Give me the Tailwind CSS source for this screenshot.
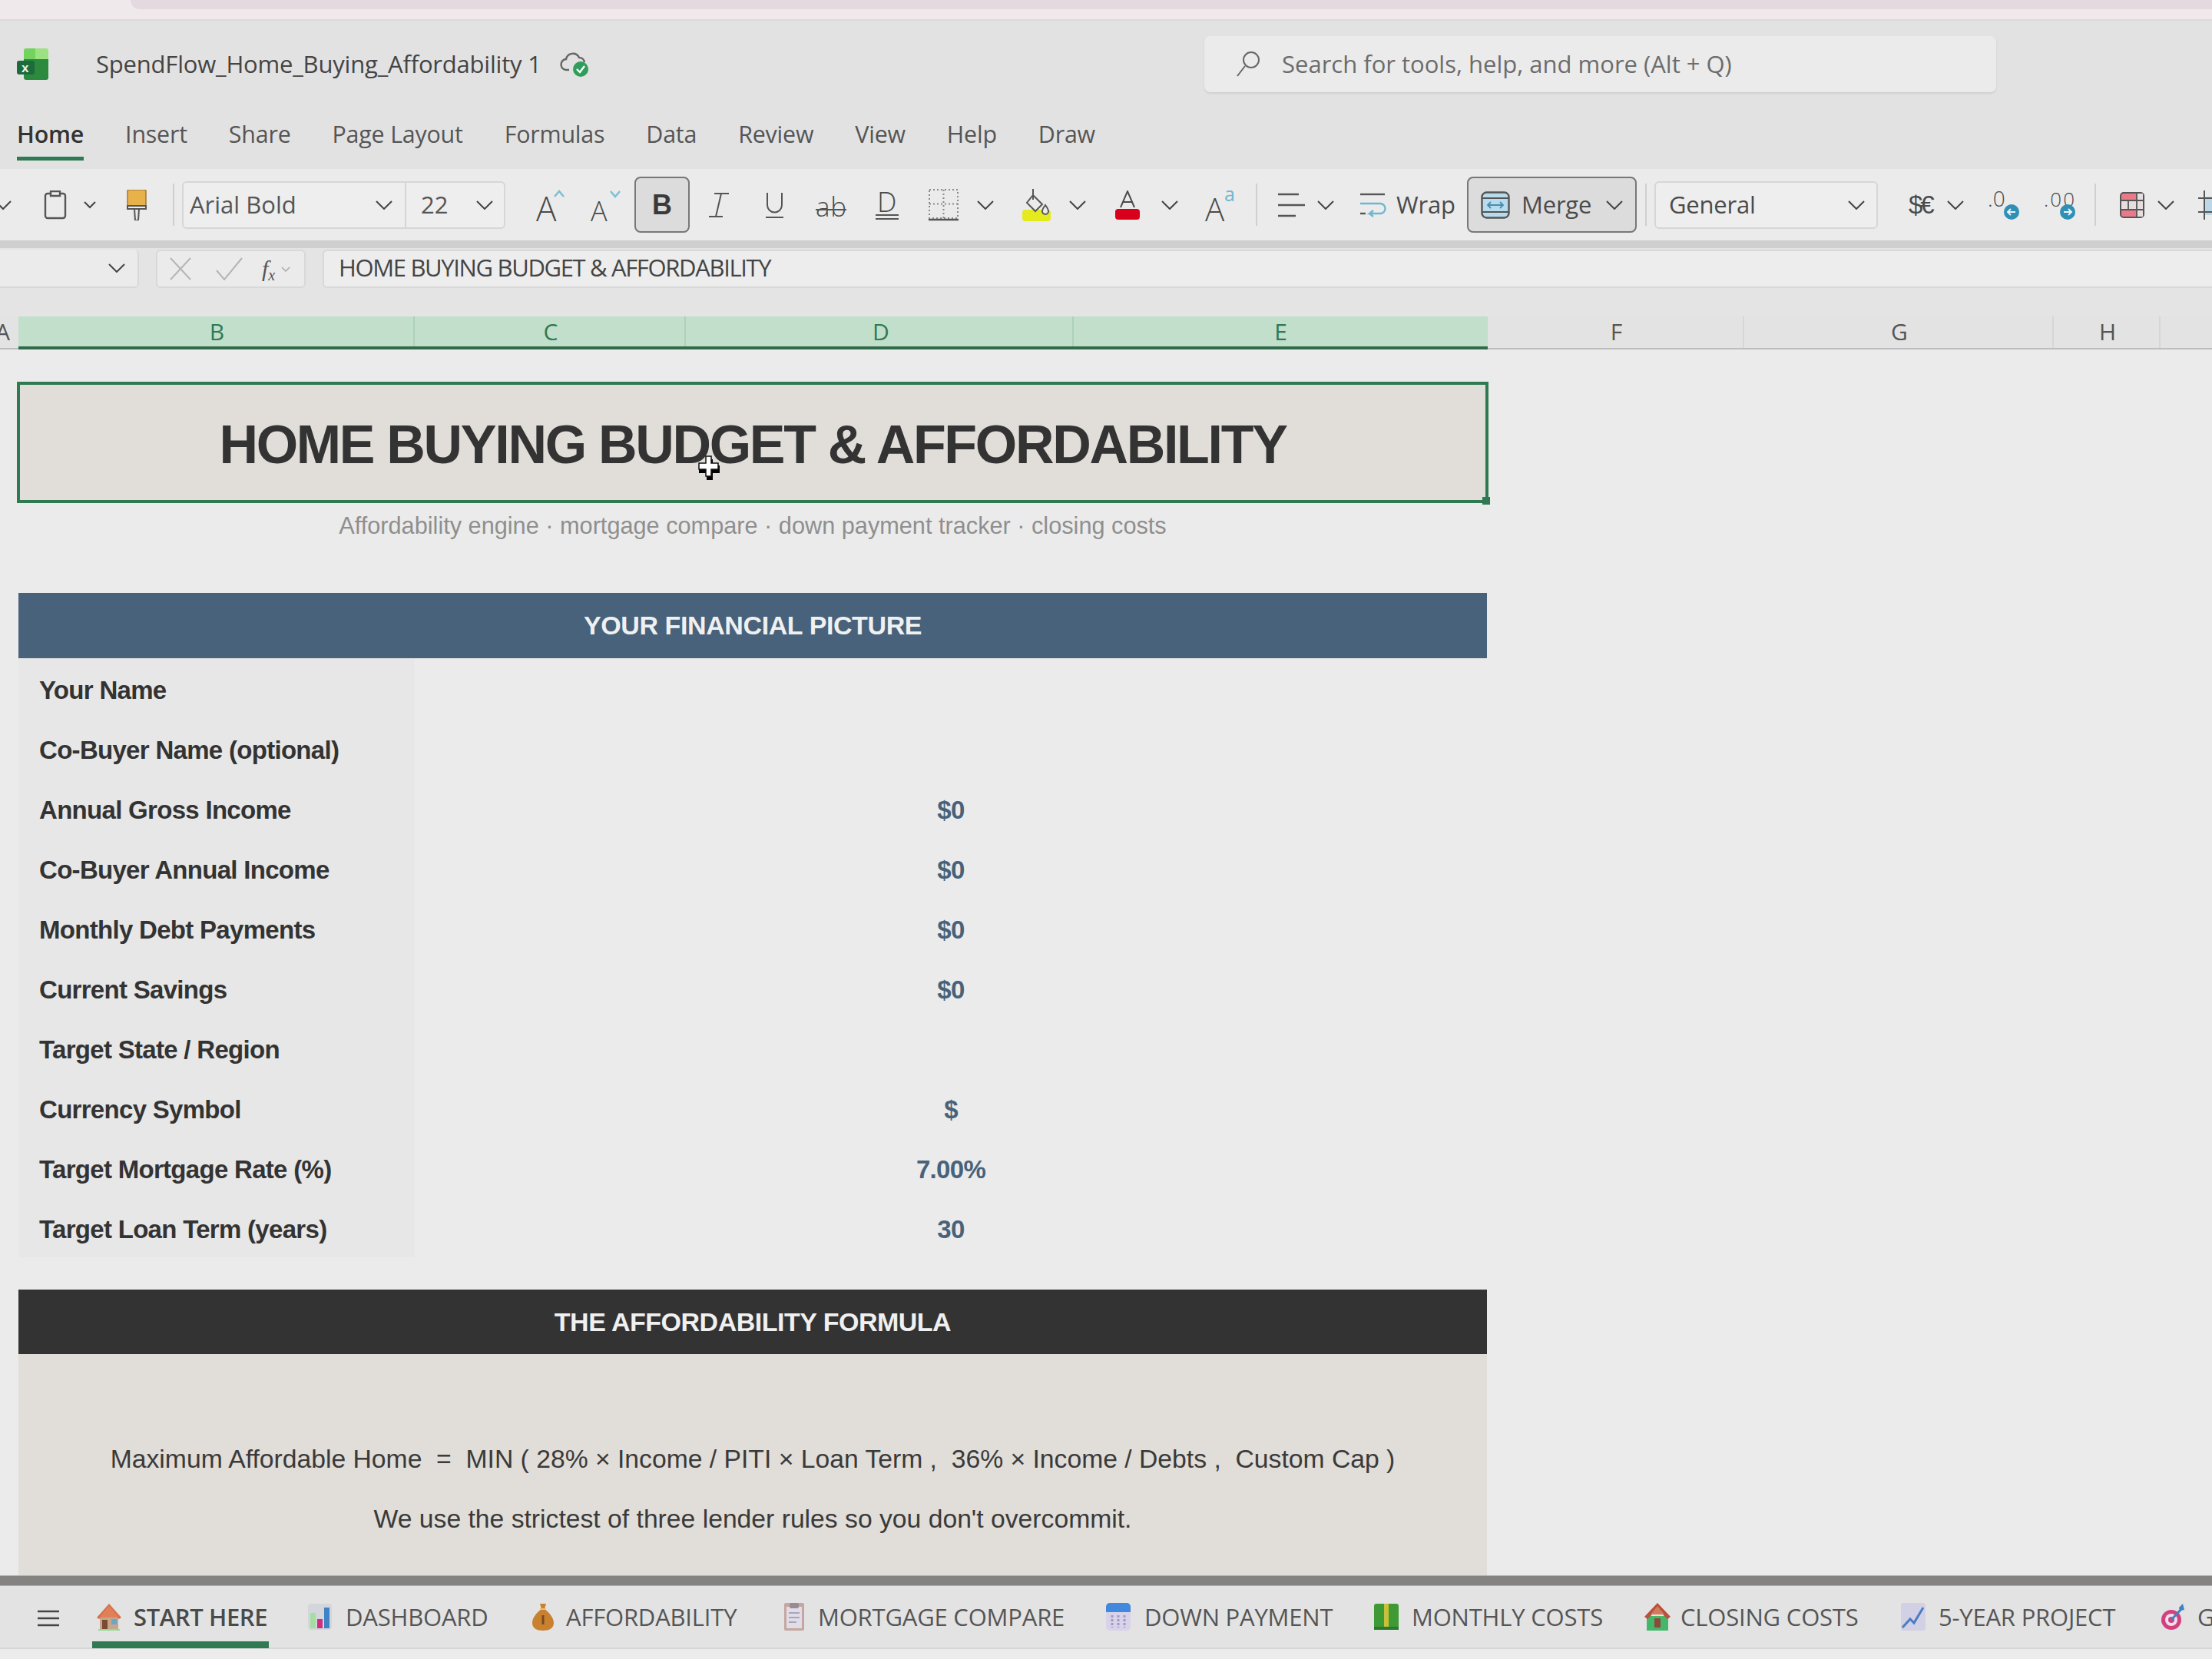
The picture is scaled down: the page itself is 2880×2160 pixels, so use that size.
<!DOCTYPE html>
<html>
  <head>
    <meta charset="UTF-8" />
    <title>SpendFlow_Home_Buying_Affordability 1</title>
    <script src="https://cdn.jsdelivr.net/npm/@tailwindcss/browser@4"></script>
  </head>
  <body>
    <div class="relative flex flex-col w-[2880px] h-[2160px] overflow-hidden bg-[#ebebeb] text-[#4a4a4a] font-['Open_Sans',sans-serif]">
      <!-- Browser strip -->
      <div class="h-[27px] shrink-0 pl-[170px] bg-[#efe9eb] border-b-2 border-[#dcd9da]">
        <div class="h-[12px] rounded-bl-[14px] bg-[#e3d9de]"></div>
      </div>

      <!-- Title bar -->
      <div class="flex items-center h-[112px] shrink-0 bg-[#e2e2e2] [&>*]:shrink-0">
        <svg class="ml-[22px] w-[41px] h-[41px] overflow-visible" viewBox="0 0 41 41">
          <path d="M9 3a3 3 0 013-3h12v14H9z" fill="#74d35f" />
          <path d="M24 0h14a3 3 0 013 3v11H24z" fill="#9ce282" />
          <path d="M9 14h32v24a3 3 0 01-3 3H12a3 3 0 01-3-3z" fill="#2b8a3e" />
          <path d="M3 16h17a3 3 0 013 3v12a3 3 0 01-3 3H3a3 3 0 01-3-3V19a3 3 0 013-3z" fill="#1d6a3b" />
          <text x="6" y="31" font-size="17" font-weight="700" fill="#e8f3ea" font-family="Liberation Sans">x</text>
        </svg>
        <span class="ml-[62px] w-[578px] text-[31px] tracking-[-0.2px] whitespace-nowrap text-[#444]">SpendFlow_Home_Buying_Affordability 1</span>
        <svg class="ml-[26px] w-[38px] h-[36px]" viewBox="0 0 38 36" fill="none">
          <path d="M12 26H9a7 7 0 01-1-14 9 9 0 0117-2 7 7 0 017 6" stroke="#666" stroke-width="2.4" />
          <circle cx="27" cy="25" r="10" fill="#2f9e5b" />
          <path d="M22 25l4 4 6-8" stroke="#fff" stroke-width="2.4" />
        </svg>
        <div class="flex items-center ml-[801px] w-[1031px] h-[73px] rounded-lg bg-[#ebebeb] shadow-[0_2px_3px_#cfcfcf]">
          <svg class="ml-[40px] w-[36px] h-[36px]" viewBox="0 0 36 36" fill="none" stroke="#666" stroke-width="2">
            <circle cx="21" cy="13" r="10" />
            <path d="M13 21L3 34" />
          </svg>
          <span class="ml-[25px] text-[31px] whitespace-nowrap text-[#6c6c6c]">Search for tools, help, and more (Alt + Q)</span>
        </div>
      </div>

      <!-- Ribbon tabs -->
      <div class="flex h-[81px] shrink-0 pl-[22px] gap-[54px] bg-[#e2e2e2] text-[30.4px] tracking-[-0.2px] text-[#555]">
        <div class="relative pt-[13px] font-semibold text-[#333]">
          Home
          <div class="absolute left-0 right-0 top-[65px] h-[5px] bg-[#2f7a52]"></div>
        </div>
        <div class="pt-[13px]">Insert</div>
        <div class="pt-[13px]">Share</div>
        <div class="pt-[13px]">Page Layout</div>
        <div class="pt-[13px]">Formulas</div>
        <div class="pt-[13px]">Data</div>
        <div class="pt-[13px]">Review</div>
        <div class="pt-[13px]">View</div>
        <div class="pt-[13px]">Help</div>
        <div class="pt-[13px]">Draw</div>
      </div>

      <!-- Toolbar -->
      <div class="flex items-center h-[93px] shrink-0 bg-[#ebebeb] text-[31px] text-[#4a4a4a] [&>*]:shrink-0">
        <svg class="w-[15px] h-[14px]" viewBox="0 0 15 14" fill="none" stroke="#444" stroke-width="2"><path d="M-6 2l10 10L14 2" /></svg>
        <svg class="ml-[42px] w-[30px] h-[38px]" viewBox="0 0 30 38" fill="none" stroke="#555" stroke-width="2.4">
          <rect x="2" y="4" width="26" height="32" rx="3" />
          <path d="M9 1h12v6H9z" fill="#ebebeb" />
        </svg>
        <svg class="ml-[22px] w-[16px] h-[10px]" viewBox="0 0 16 10" fill="none" stroke="#444" stroke-width="2"><path d="M1 1l7 7 7-7" /></svg>
        <svg class="ml-[40px] w-[26px] h-[40px]" viewBox="0 0 26 40" fill="none">
          <rect x="1" y="0" width="24" height="21" rx="2" fill="#e8b24a" stroke="#9a7a3a" stroke-width="1.5" />
          <path d="M1 21h24v4H1zM10 25h6l-1 15h-4z" fill="#ebebeb" stroke="#555" stroke-width="2" />
        </svg>
        <div class="ml-[34px] w-[2px] h-[55px] bg-[#cfcfcf]"></div>

        <!-- Font family and size -->
        <div class="flex items-center ml-[10px] w-[421px] h-[62px] rounded-md border-2 border-[#d6d6d6] bg-[#eeeeee]">
          <div class="flex items-center w-[290px] h-full border-r-2 border-[#d6d6d6]">
            <span class="ml-[8px] w-[242px] text-[#555]">Arial Bold</span>
            <svg class="w-[22px] h-[12px]" viewBox="0 0 22 12" fill="none" stroke="#444" stroke-width="2"><path d="M1 1l10 10L21 1" /></svg>
          </div>
          <span class="ml-[19px] w-[72px] text-[#555]">22</span>
          <svg class="w-[22px] h-[12px]" viewBox="0 0 22 12" fill="none" stroke="#444" stroke-width="2"><path d="M1 1l10 10L21 1" /></svg>
        </div>

        <svg class="ml-[40px] w-[37px] h-[46px] overflow-visible" viewBox="0 0 37 46" fill="none">
          <text x="0" y="44" font-size="44" font-weight="300" fill="#4a4a4a" font-family="Open Sans">A</text>
          <path d="M24 12l6-7 6 7" stroke="#7cc0d4" stroke-width="2.5" />
        </svg>
        <svg class="ml-[34px] w-[39px] h-[46px] overflow-visible" viewBox="0 0 39 46" fill="none">
          <text x="0" y="44" font-size="36" font-weight="300" fill="#4a4a4a" font-family="Open Sans">A</text>
          <path d="M26 5l6 7 6-7" stroke="#7cc0d4" stroke-width="2.5" />
        </svg>
        <div class="flex items-center justify-center ml-[18px] w-[72px] h-[73px] rounded-lg border-2 border-[#777] bg-[#dcdcdc] text-[36px] font-bold text-[#3a3a3a] font-['Liberation_Sans',sans-serif]">B</div>
        <svg class="ml-[25px] w-[27px] h-[34px]" viewBox="0 0 27 34" fill="none" stroke="#555" stroke-width="2"><path d="M7 2h19M16 2L9 32M0 32h18" /></svg>
        <svg class="ml-[46px] w-[25px] h-[34px]" viewBox="0 0 25 34" fill="none" stroke="#555" stroke-width="2"><path d="M3 1v16a9.500 9.500 0 0019 0V1M1 33h23" /></svg>
        <svg class="ml-[41px] w-[40px] h-[38px] overflow-visible" viewBox="0 0 40 38" fill="none">
          <text x="0" y="34" font-size="35" font-weight="300" fill="#4a4a4a" font-family="Open Sans" textLength="40">ab</text>
          <path d="M0 25h40" stroke="#555" stroke-width="2" />
        </svg>
        <svg class="ml-[37px] w-[32px] h-[38px] overflow-visible" viewBox="0 0 32 38" fill="none">
          <text x="3" y="28" font-size="36" font-weight="300" fill="#4a4a4a" font-family="Open Sans">D</text>
          <path d="M1 32h30M1 37h30" stroke="#555" stroke-width="2" />
        </svg>
        <svg class="ml-[38px] w-[39px] h-[42px]" viewBox="0 0 39 42" fill="none">
          <path d="M1 1h37v37H1zM19.500 1v37M1 19.500h37" stroke="#8a8a8a" stroke-width="2" stroke-dasharray="2 3" />
          <path d="M0 40h39" stroke="#555" stroke-width="2.500" />
        </svg>
        <svg class="ml-[24px] w-[22px] h-[12px]" viewBox="0 0 22 12" fill="none" stroke="#444" stroke-width="2"><path d="M1 1l10 10L21 1" /></svg>
        <svg class="ml-[37px] w-[37px] h-[42px]" viewBox="0 0 37 42" fill="none">
          <rect x="0" y="27" width="37" height="15" rx="4" fill="#e4ea1e" />
          <path d="M14 8l12 12-9 9L6 18zM14 0v14" stroke="#555" stroke-width="2" />
          <path d="M30 21c-3 4-4 6-4 8a4 4 0 008 0c0-2-1-4-4-8z" fill="#ebebeb" stroke="#555" stroke-width="2" />
        </svg>
        <svg class="ml-[24px] w-[22px] h-[12px]" viewBox="0 0 22 12" fill="none" stroke="#444" stroke-width="2"><path d="M1 1l10 10L21 1" /></svg>
        <svg class="ml-[38px] w-[32px] h-[38px]" viewBox="0 0 32 38" fill="none">
          <path d="M7 22l9-21 9 21M10 15h12" stroke="#4a4a4a" stroke-width="2" />
          <rect x="0" y="24" width="32" height="14" rx="4" fill="#d9001b" />
        </svg>
        <svg class="ml-[28px] w-[22px] h-[12px]" viewBox="0 0 22 12" fill="none" stroke="#444" stroke-width="2"><path d="M1 1l10 10L21 1" /></svg>
        <svg class="ml-[35px] w-[39px] h-[46px] overflow-visible" viewBox="0 0 39 46" fill="none">
          <text x="0" y="44" font-size="42" font-weight="300" fill="#4a4a4a" font-family="Open Sans">A</text>
          <text x="25" y="18" font-size="25" fill="#6fb7cf" font-family="Open Sans">a</text>
        </svg>
        <div class="ml-[27px] w-[2px] h-[55px] bg-[#cfcfcf]"></div>
        <svg class="ml-[26px] w-[36px] h-[32px]" viewBox="0 0 36 32" fill="none" stroke="#555" stroke-width="2.400"><path d="M1 2h27M1 16h35M1 30h23" /></svg>
        <svg class="ml-[16px] w-[22px] h-[12px]" viewBox="0 0 22 12" fill="none" stroke="#444" stroke-width="2"><path d="M1 1l10 10L21 1" /></svg>
        <svg class="ml-[32px] w-[36px] h-[32px]" viewBox="0 0 36 32" fill="none" stroke-width="2.400">
          <path d="M2 2h32" stroke="#555" />
          <path d="M2 14h26a6 6 0 010 13H14l5-4M14 27l5 4" stroke="#6fb7cf" />
          <path d="M2 27h7" stroke="#555" />
        </svg>
        <span class="ml-[13px] w-[78px] tracking-[-0.2px]">Wrap</span>

        <div class="flex items-center ml-[14px] w-[221px] h-[73px] rounded-lg border-2 border-[#777] bg-[#dcdcdc]">
          <svg class="ml-[16px] w-[38px] h-[36px]" viewBox="0 0 38 36" fill="none">
            <rect x="1.500" y="1.500" width="35" height="33" rx="6" fill="#b6dcee" stroke="#555" stroke-width="2.400" />
            <path d="M1.500 9h35M1.500 27h35" stroke="#555" stroke-width="2" />
            <path d="M9 18h20M13 14l-4 4 4 4M25 14l4 4-4 4" stroke="#4a8cad" stroke-width="1.800" />
          </svg>
          <span class="ml-[15px] w-[100px] tracking-[-0.2px]">Merge</span>
          <svg class="ml-[10px] w-[22px] h-[12px]" viewBox="0 0 22 12" fill="none" stroke="#444" stroke-width="2"><path d="M1 1l10 10L21 1" /></svg>
        </div>
        <div class="ml-[11px] w-[2px] h-[55px] bg-[#cfcfcf]"></div>
        <div class="flex items-center ml-[10px] w-[291px] h-[62px] rounded-md border-2 border-[#d6d6d6] bg-[#eeeeee]">
          <span class="ml-[17px] w-[233px] tracking-[-0.2px]">General</span>
          <svg class="w-[22px] h-[12px]" viewBox="0 0 22 12" fill="none" stroke="#444" stroke-width="2"><path d="M1 1l10 10L21 1" /></svg>
        </div>
        <span class="ml-[40px] w-[34px] whitespace-nowrap tracking-[-3px] text-[33px] font-['Liberation_Sans',sans-serif]">$€</span>
        <svg class="ml-[16px] w-[22px] h-[12px]" viewBox="0 0 22 12" fill="none" stroke="#444" stroke-width="2"><path d="M1 1l10 10L21 1" /></svg>
        <svg class="ml-[31px] w-[41px] h-[40px] overflow-visible" viewBox="0 0 41 40" fill="none">
          <text x="0" y="22" font-size="28" font-weight="300" fill="#4a4a4a" font-family="Open Sans">.0</text>
          <circle cx="31" cy="29" r="10" fill="#2f8fb5" />
          <path d="M36 29H26M30 25l-4 4 4 4" stroke="#e8f4f8" stroke-width="2" />
        </svg>
        <svg class="ml-[32px] w-[42px] h-[40px] overflow-visible" viewBox="0 0 42 40" fill="none">
          <text x="0" y="22" font-size="26" font-weight="300" fill="#4a4a4a" font-family="Open Sans" textLength="40">.00</text>
          <circle cx="31" cy="29" r="10" fill="#2f8fb5" />
          <path d="M26 29h10M32 25l4 4-4 4" stroke="#e8f4f8" stroke-width="2" />
        </svg>
        <div class="ml-[24px] w-[2px] h-[55px] bg-[#cfcfcf]"></div>
        <svg class="ml-[31px] w-[32px] h-[34px]" viewBox="0 0 32 34" fill="none">
          <rect x="1" y="1" width="30" height="32" rx="4" fill="#e87b8a" stroke="#555" stroke-width="2" />
          <path d="M2 11h28v12H2z" fill="#e6dede" />
          <path d="M22 2h8v30h-8z" fill="#e6dede" />
          <path d="M1 11h30M1 23h30M22 1v32M11 11v12" stroke="#555" stroke-width="1.800" />
        </svg>
        <svg class="ml-[17px] w-[22px] h-[12px]" viewBox="0 0 22 12" fill="none" stroke="#444" stroke-width="2"><path d="M1 1l10 10L21 1" /></svg>
        <svg class="ml-[31px] w-[30px] h-[38px]" viewBox="0 0 30 38" fill="none">
          <path d="M9 8h21v24H9z" fill="#bcd8e8" />
          <path d="M8 0v38M0 10h30M0 28h30" stroke="#555" stroke-width="2" />
        </svg>
      </div>
      <div class="h-[10px] shrink-0 bg-[#cfcfd0]"></div>

      <!-- Formula bar -->
      <div class="flex items-start gap-[22px] h-[89px] pt-[2px] shrink-0 bg-[#e4e4e4]">
        <div class="flex items-center justify-end w-[181px] h-[50px] pr-[16px] rounded-r-md border-r-2 border-b-2 border-[#d8d8d8] bg-[#ebebeb]">
          <svg class="w-[22px] h-[12px]" viewBox="0 0 22 12" fill="none" stroke="#444" stroke-width="2"><path d="M1 1l10 10L21 1" /></svg>
        </div>
        <div class="flex items-center w-[195px] h-[50px] rounded-md border-2 border-[#d8d8d8] bg-[#ebebeb]">
          <svg class="ml-[15px] w-[30px] h-[30px]" viewBox="0 0 30 30" fill="none" stroke="#b5b5b5" stroke-width="2"><path d="M2 1l26 28M28 1L2 29" /></svg>
          <svg class="ml-[30px] w-[37px] h-[30px]" viewBox="0 0 37 30" fill="none" stroke="#b5b5b5" stroke-width="2"><path d="M2 17l10 12L35 1" /></svg>
          <span class="ml-[24px] text-[30px] leading-none italic text-[#555] font-['Liberation_Serif',serif]">f<sub class="text-[20px]">x</sub></span>
          <svg class="ml-[8px] w-[12px] h-[7px]" viewBox="0 0 12 7" fill="none" stroke="#aaa" stroke-width="1.500"><path d="M1 1l5 5 5-5" /></svg>
        </div>
        <div class="flex items-center flex-1 h-[50px] pl-[19px] pb-[4px] rounded-l-md border-2 border-r-0 border-[#d8d8d8] bg-[#ededed] text-[31px] tracking-[-1.350px] whitespace-nowrap text-[#444]">HOME BUYING BUDGET &amp; AFFORDABILITY</div>
      </div>

      <!-- Column headers -->
      <div class="flex h-[43px] shrink-0 bg-[#e3e3e3] text-[30px] leading-[39px] text-[#555]">
        <div class="w-[24px] border-b-[2px] border-[#bdbdbd] overflow-hidden"><span class="block -ml-[6px]">A</span></div>
        <div class="flex w-[1913px] border-b-[4px] border-[#2f6b4b] bg-[#c1dfcb] text-[#2f7a50]">
          <div class="w-[516px] pl-[3px] text-center border-r-2 border-[#aed1b9]">B</div>
          <div class="w-[353px] pl-[3px] text-center border-r-2 border-[#aed1b9]">C</div>
          <div class="w-[505px] pl-[5px] text-center border-r-2 border-[#aed1b9]">D</div>
          <div class="w-[539px] text-center">E</div>
        </div>
        <div class="flex flex-1 border-b-[2px] border-[#bdbdbd]">
          <div class="w-[334px] pl-[3px] text-center border-r-2 border-[#d6d6d6]">F</div>
          <div class="w-[403px] pl-[3px] text-center border-r-2 border-[#d6d6d6]">G</div>
          <div class="w-[139px] pl-[3px] text-center border-r-2 border-[#d6d6d6]">H</div>
        </div>
      </div>

      <!-- Sheet -->
      <div class="relative flex-1 pl-[24px] pt-[42px] overflow-hidden font-['Liberation_Sans',sans-serif]">
        <div class="w-[1912px]">
          <div class="relative flex items-center justify-center h-[158px] pt-[6px] -mx-[2px] border-[4px] border-[#2f7a52] bg-[#e1ddd8] text-[70px] tracking-[-2.3px] leading-none font-bold text-[#333]">
            HOME BUYING BUDGET &amp; AFFORDABILITY
            <div class="absolute -right-[6px] -bottom-[6px] w-[10px] h-[10px] bg-[#2f7a52]"></div>
          </div>
          <div class="flex items-center justify-center h-[60px] text-[30.7px] text-[#8f8f8f]">Affordability engine · mortgage compare · down payment tracker · closing costs</div>

          <div class="flex items-center justify-center h-[85px] mt-[57px] bg-[#47627a] text-[34px] tracking-[-0.4px] font-bold text-[#f0f0f0]">YOUR FINANCIAL PICTURE</div>
          <div class="grid grid-cols-[516px_1fr] auto-rows-[78px] items-stretch text-[33px] tracking-[-0.7px] font-bold text-[#333] [&>*]:pt-[6px]">
            <div class="flex items-center pl-[27px] bg-[#e7e7e7]">Your Name</div>
            <div class="flex items-center justify-center text-[#47627a]"></div>
            <div class="flex items-center pl-[27px] bg-[#e7e7e7]">Co-Buyer Name (optional)</div>
            <div class="flex items-center justify-center text-[#47627a]"></div>
            <div class="flex items-center pl-[27px] bg-[#e7e7e7]">Annual Gross Income</div>
            <div class="flex items-center justify-center text-[#47627a]">$0</div>
            <div class="flex items-center pl-[27px] bg-[#e7e7e7]">Co-Buyer Annual Income</div>
            <div class="flex items-center justify-center text-[#47627a]">$0</div>
            <div class="flex items-center pl-[27px] bg-[#e7e7e7]">Monthly Debt Payments</div>
            <div class="flex items-center justify-center text-[#47627a]">$0</div>
            <div class="flex items-center pl-[27px] bg-[#e7e7e7]">Current Savings</div>
            <div class="flex items-center justify-center text-[#47627a]">$0</div>
            <div class="flex items-center pl-[27px] bg-[#e7e7e7]">Target State / Region</div>
            <div class="flex items-center justify-center text-[#47627a]"></div>
            <div class="flex items-center pl-[27px] bg-[#e7e7e7]">Currency Symbol</div>
            <div class="flex items-center justify-center text-[#47627a]">$</div>
            <div class="flex items-center pl-[27px] bg-[#e7e7e7]">Target Mortgage Rate (%)</div>
            <div class="flex items-center justify-center text-[#47627a]">7.00%</div>
            <div class="flex items-center pl-[27px] bg-[#e7e7e7]">Target Loan Term (years)</div>
            <div class="flex items-center justify-center text-[#47627a]">30</div>
          </div>

          <div class="flex items-center justify-center h-[84px] mt-[42px] bg-[#333333] text-[34px] tracking-[-0.5px] font-bold text-[#f0f0f0]">THE AFFORDABILITY FORMULA</div>
          <div class="h-[300px] pt-[97px] bg-[#e1ddd8] text-[33.7px] text-[#3a3a3a]">
            <div class="flex items-center justify-center h-[78px] whitespace-pre">Maximum Affordable Home  =  MIN ( 28% × Income / PITI × Loan Term ,  36% × Income / Debts ,  Custom Cap )</div>
            <div class="flex items-center justify-center h-[78px]">We use the strictest of three lender rules so you don't overcommit.</div>
          </div>
        </div>

        <!-- Mouse cursor -->
        <svg class="absolute left-[905px] top-[136px] w-[36px] h-[36px]" viewBox="0 0 36 36">
          <path d="M14 5h8v8h9v10h-9v9h-8v-9H4V13h10z" fill="#000" transform="translate(1 2)" />
          <path d="M14 3h7v9h9v8h-9v9h-7v-9H5v-8h9z" fill="#fff" stroke="#111" stroke-width="1.500" />
        </svg>
      </div>

      <!-- Scrollbar -->
      <div class="h-[14px] shrink-0 border-y border-[#b0aeae] bg-[#858382]"></div>

      <!-- Sheet tabs -->
      <div class="flex items-start h-[82px] shrink-0 border-b-2 border-[#d6d6d6] bg-[#e3e3e3] text-[31px] tracking-[-0.2px] whitespace-nowrap text-[#555] [&>*]:shrink-0">
        <svg class="ml-[48px] mt-[31px] w-[30px] h-[22px]" viewBox="0 0 30 22" fill="none" stroke="#444" stroke-width="2.500"><path d="M1 2h28M1 11h28M1 20h28" /></svg>
        <div class="relative flex items-center ml-[48px] h-[80px]">
          <svg class="w-[32px] h-[36px]" viewBox="0 0 32 36">
            <path d="M4 17h24v17H4z" fill="#c7a78c" />
            <path d="M0 19L16 1l16 18-3 2L16 8 3 21z" fill="#d9704a" />
            <path d="M16 4L5 17v2h22v-2z" fill="#e08058" />
            <rect x="7" y="22" width="7" height="12" fill="#7a4a33" />
            <rect x="19" y="21" width="7" height="7" fill="#6aa6c9" />
            <path d="M2 35h28" stroke="#8fdc8f" stroke-width="2" />
          </svg>
          <span class="ml-[16px] w-[176px] font-semibold tracking-[-0.4px] text-[#4a4a4a]">START HERE</span>
          <div class="absolute -left-[6px] right-0 top-[72px] h-[9px] bg-[#2f7a52]"></div>
        </div>
        <div class="flex items-center ml-[51px] h-[80px]">
          <svg class="w-[31px] h-[34px]" viewBox="0 0 31 34">
            <rect width="31" height="34" rx="4" fill="#d3d7dc" />
            <rect x="3" y="12" width="7" height="20" fill="#a5dfa0" />
            <rect x="12" y="20" width="7" height="12" fill="#cf2f7f" />
            <rect x="21" y="5" width="7" height="27" fill="#3f82c6" />
          </svg>
          <span class="ml-[18px] w-[184px]">DASHBOARD</span>
        </div>
        <div class="flex items-center ml-[59px] h-[80px]">
          <svg class="w-[28px] h-[36px]" viewBox="0 0 28 36">
            <path d="M10 1h8l-2 7c7 5 12 12 12 18 0 7-6 10-14 10S0 33 0 26C0 20 5 13 12 8z" fill="#c9812f" />
            <path d="M10 8h8" stroke="#e9c07a" stroke-width="2" />
            <path d="M14 16v12" stroke="#7a4a1e" stroke-width="3" />
          </svg>
          <span class="ml-[16px] w-[223px]">AFFORDABILITY</span>
        </div>
        <div class="flex items-center ml-[61px] h-[80px]">
          <svg class="w-[26px] h-[36px]" viewBox="0 0 26 36">
            <rect width="26" height="36" rx="2" fill="#c5a79f" />
            <rect x="3" y="5" width="20" height="28" fill="#e0dde8" />
            <rect x="7" y="0" width="12" height="7" rx="2" fill="#9a8a94" />
            <path d="M6 13h14M6 19h14M6 25h10" stroke="#a9a6b8" stroke-width="2" />
          </svg>
          <span class="ml-[18px] w-[319px]">MORTGAGE COMPARE</span>
        </div>
        <div class="flex items-center ml-[56px] h-[80px]">
          <svg class="w-[32px] h-[36px]" viewBox="0 0 32 36">
            <rect width="32" height="36" rx="5" fill="#d8d3ea" />
            <path d="M0 5a5 5 0 015-5h22a5 5 0 015 5v7H0z" fill="#4288dc" />
            <path d="M8 16v16M16 16v16M24 16v16" stroke="#9f9ac0" stroke-width="3" stroke-dasharray="3 2" />
          </svg>
          <span class="ml-[18px] w-[244px]">DOWN PAYMENT</span>
        </div>
        <div class="flex items-center ml-[55px] h-[80px]">
          <svg class="w-[32px] h-[34px]" viewBox="0 0 32 34">
            <rect width="32" height="34" rx="3" fill="#3d9a34" />
            <rect x="13" y="0" width="6" height="34" fill="#c9c13a" />
            <rect y="30" width="32" height="4" fill="#2a7a2e" />
          </svg>
          <span class="ml-[17px] w-[248px]">MONTHLY COSTS</span>
        </div>
        <div class="flex items-center ml-[55px] h-[80px]">
          <svg class="w-[34px] h-[36px]" viewBox="0 0 34 36">
            <path d="M3 17h28v19H3z" fill="#45b76a" />
            <path d="M0 18L17 0l17 18-4 3L17 8 4 21z" fill="#b94f3c" />
            <path d="M17 4L8 15h18z" fill="#d57a5a" />
            <rect x="13" y="20" width="8" height="12" fill="#8a4b3a" />
          </svg>
          <span class="ml-[13px] w-[232px]">CLOSING COSTS</span>
        </div>
        <div class="flex items-center ml-[55px] h-[80px]">
          <svg class="w-[32px] h-[36px]" viewBox="0 0 32 36" fill="none">
            <rect width="32" height="36" rx="3" fill="#d2d0e4" />
            <path d="M2 32l10-11 5 5L29 6" stroke="#4a7cc4" stroke-width="3" />
          </svg>
          <span class="ml-[17px] w-[236px]">5-YEAR PROJECT</span>
        </div>
        <div class="flex items-center ml-[53px] h-[80px]">
          <svg class="w-[32px] h-[36px]" viewBox="0 0 32 36" fill="none">
            <circle cx="14" cy="22" r="13" fill="#d4407f" />
            <circle cx="14" cy="22" r="8" fill="#efe1e8" />
            <circle cx="14" cy="22" r="4" fill="#d4407f" />
            <path d="M14 22L28 7" stroke="#3f82c6" stroke-width="3" />
            <path d="M24 6l5-5 2 8-6 1z" fill="#3f82c6" />
          </svg>
          <span class="ml-[16px]">GOALS</span>
        </div>
      </div>
      <div class="flex-none h-[13px] bg-[#ececec]"></div>
    </div>
  </body>
</html>
